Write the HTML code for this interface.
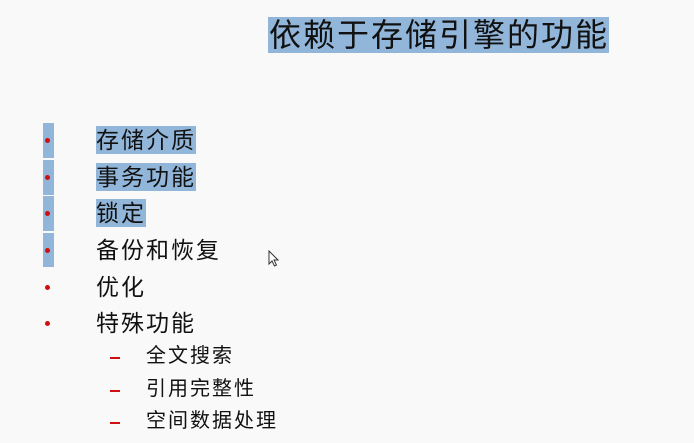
<!DOCTYPE html>
<html><head><meta charset="utf-8"><style>
html,body{margin:0;padding:0;}
body{width:694px;height:443px;background:#f9f9f9;position:relative;overflow:hidden;font-family:"Liberation Sans","Noto Sans CJK SC",sans-serif;color:#111;}
.a{position:absolute;white-space:nowrap;}
.hl{background:#92b6d9;}
.t{left:268px;top:17px;height:36px;font-size:32px;line-height:36px;padding:0 0 0 1px;letter-spacing:2px;}
.bar{left:43px;width:11px;background:#92b6d9;}
.dot{width:5px;height:5px;border-radius:50%;background:#d01010;}
.txt{left:96px;font-size:23px;line-height:28px;letter-spacing:2px;}
.sub{left:146px;font-size:20px;line-height:26px;letter-spacing:2px;}
.dash{left:110px;width:10px;height:2px;background:#d01010;}
</style></head><body>
<div class="a t hl">依赖于存储引擎的功能</div>
<div class="a bar" style="top:123px;height:35px"></div>
<div class="a bar" style="top:160px;height:35px"></div>
<div class="a bar" style="top:196px;height:35px"></div>
<div class="a bar" style="top:233px;height:34px"></div>
<div class="a dot" style="left:45px;top:138px"></div>
<div class="a dot" style="left:45px;top:175px"></div>
<div class="a dot" style="left:45px;top:211px"></div>
<div class="a dot" style="left:45px;top:248px"></div>
<div class="a dot" style="left:45px;top:285px"></div>
<div class="a dot" style="left:45px;top:321px"></div>
<div class="a txt hl" style="top:126px">存储介质</div>
<div class="a txt hl" style="top:163px">事务功能</div>
<div class="a txt hl" style="top:199px">锁定</div>
<div class="a txt" style="top:236px">备份和恢复</div>
<div class="a txt" style="top:273px">优化</div>
<div class="a txt" style="top:309px">特殊功能</div>
<div class="a dash" style="top:357px"></div>
<div class="a dash" style="top:390px"></div>
<div class="a dash" style="top:422px"></div>
<div class="a sub" style="top:343px">全文搜索</div>
<div class="a sub" style="top:376px">引用完整性</div>
<div class="a sub" style="top:408px">空间数据处理</div>
<svg class="a" style="left:268px;top:250px" width="12" height="18" viewBox="0 0 12 18"><path d="M1 1 L1 14 L4 11 L6.5 16 L8.5 15 L6 10 L10 10 Z" fill="#fff" stroke="#333" stroke-width="1"/></svg>
</body></html>
